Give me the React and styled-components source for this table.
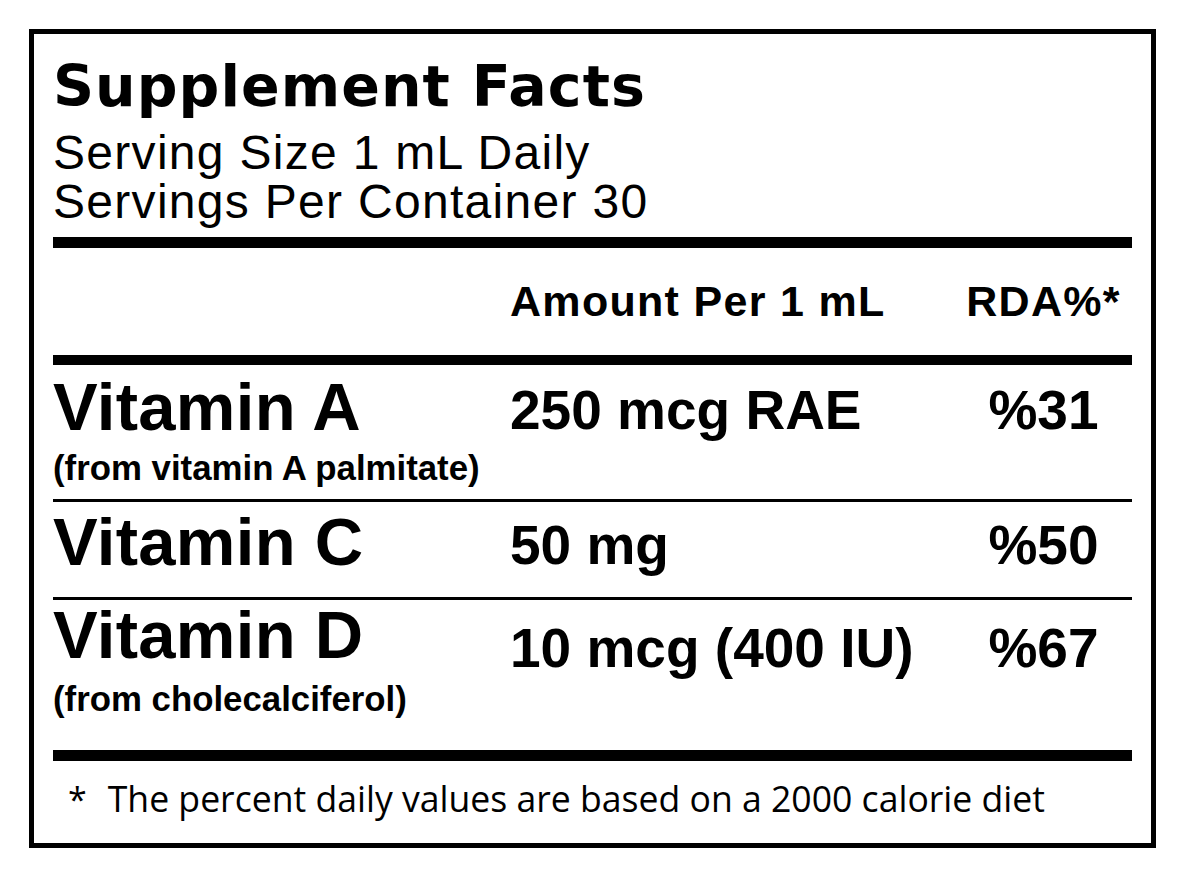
import React from "react";
import styled, { createGlobalStyle } from "styled-components";

const GlobalStyle = createGlobalStyle`
  html, body {
    margin: 0;
    padding: 0;
    background: #fff;
  }
  body {
    font-family: "Liberation Sans", Arial, sans-serif;
    color: #000;
  }
`;

const Label = styled.section`
  box-sizing: border-box;
  width: 1127px;
  margin: 29px 0 0 29px;
  border: 5px solid #000;
  padding: 24px 19px 26px;
`;

const Title = styled.h1`
  margin: 0;
  font-family: "DejaVu Sans", "Liberation Sans", sans-serif;
  font-weight: 700;
  font-size: 57px;
  line-height: 57px;
  letter-spacing: 1.05px;
`;

const Serving = styled.div`
  margin-top: 13px;
  font-size: 48px;
  line-height: 49px;
  letter-spacing: 1.3px;
`;

const Rule = styled.div`
  height: ${(p) => p.$size}px;
  margin-top: ${(p) => p.$space || 0}px;
  background: #000;
`;

const Columns = styled.div`
  display: grid;
  grid-template-columns: 457px 445px 177px;
  align-items: start;
`;

const HeadRow = styled(Columns)`
  height: 107px;
  align-items: center;
  font-weight: 700;
  font-size: 43px;
  line-height: 1;
  letter-spacing: 1.3px;
`;

const HeadCell = styled.div`
  grid-column: ${(p) => p.$col};
  text-align: ${(p) => (p.$center ? "center" : "left")};
`;

const NutrientRow = styled(Columns)`
  padding: ${(p) => p.$top}px 0 ${(p) => p.$bottom}px;
  font-weight: 700;
`;

const Name = styled.div`
  font-size: 67px;
  line-height: 67px;
  letter-spacing: 0.3px;
`;

const Source = styled.div`
  margin-top: ${(p) => p.$gap}px;
  font-size: 34.8px;
  line-height: 34px;
`;

const Amount = styled.div`
  padding-top: ${(p) => p.$drop}px;
  font-size: 55px;
  line-height: 75px;
  text-align: ${(p) => (p.$center ? "center" : "left")};
`;

const Footnote = styled.div`
  display: flex;
  align-items: baseline;
  gap: 21px;
  margin-top: 19px;
  padding-left: 15px;
  font-family: "Open Sans", "Noto Sans", sans-serif;
  font-size: 35.6px;
  line-height: 36px;
`;

const Star = styled.span`
  font-size: 34px;
`;

const nutrients = [
  {
    name: "Vitamin A",
    source: "(from vitamin A palmitate)",
    amount: "250 mcg RAE",
    rda: "%31",
    top: 8,
    gap: 11,
    bottom: 14,
    drop: 0,
    rule: 3,
  },
  {
    name: "Vitamin C",
    amount: "50 mg",
    rda: "%50",
    top: 6,
    bottom: 14,
    drop: 0,
    rule: 3,
  },
  {
    name: "Vitamin D",
    source: "(from cholecalciferol)",
    amount: "10 mcg (400 IU)",
    rda: "%67",
    top: 1,
    gap: 14,
    bottom: 34,
    drop: 10,
    rule: 11,
  },
];

const App = () => {
  return (
    <>
      <GlobalStyle />
      <Label>
        <Title>Supplement Facts</Title>
        <Serving>
          Serving Size 1 mL Daily
          <br />
          Servings Per Container 30
        </Serving>
        <Rule $size={11} $space={11} />

        <HeadRow>
          <HeadCell $col={2}>Amount Per 1 mL</HeadCell>
          <HeadCell $col={3} $center>
            RDA%*
          </HeadCell>
        </HeadRow>
        <Rule $size={10} />

        {nutrients.map((item) => (
          <React.Fragment key={item.name}>
            <NutrientRow $top={item.top} $bottom={item.bottom}>
              <div>
                <Name>{item.name}</Name>
                {item.source && <Source $gap={item.gap}>{item.source}</Source>}
              </div>
              <Amount $drop={item.drop}>{item.amount}</Amount>
              <Amount $drop={item.drop} $center>
                {item.rda}
              </Amount>
            </NutrientRow>
            <Rule $size={item.rule} />
          </React.Fragment>
        ))}

        <Footnote>
          <Star>*</Star>
          <span>The percent daily values are based on a 2000 calorie diet</span>
        </Footnote>
      </Label>
    </>
  );
};

export default App;
